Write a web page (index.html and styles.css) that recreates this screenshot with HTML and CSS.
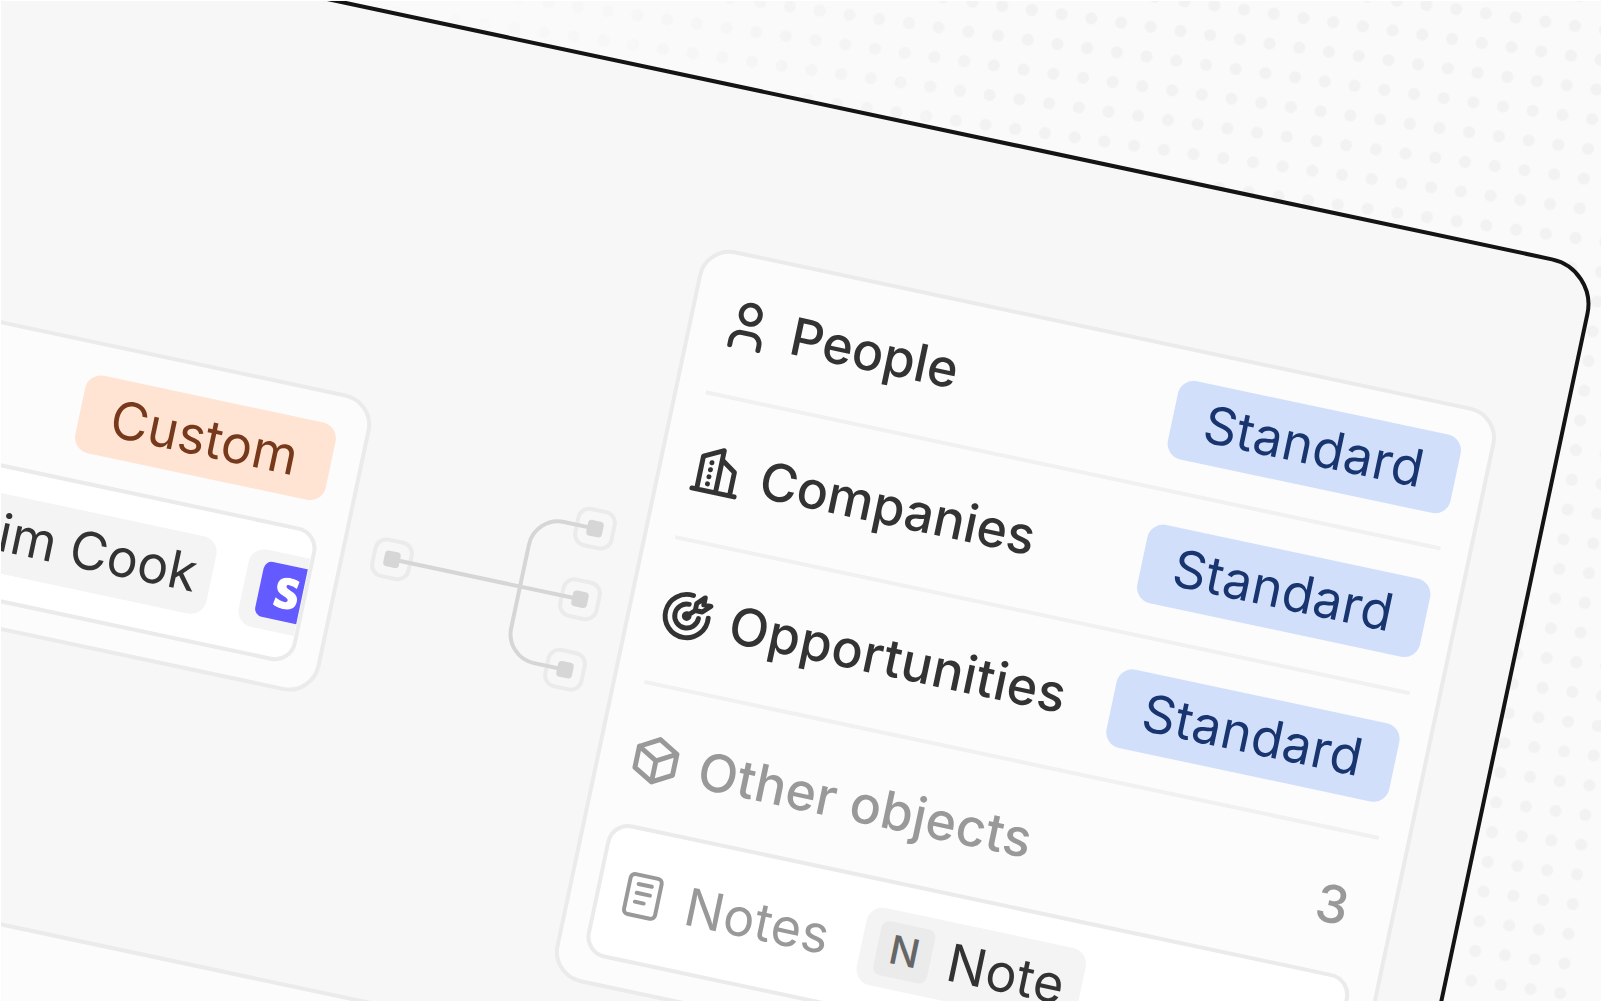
FILE: index.html
```html
<!DOCTYPE html>
<html lang="en">
<head>
<meta charset="utf-8">
<title>Data model</title>
<link rel="stylesheet" href="styles.css">
</head>
<body>
<main class="scene">
  <svg class="dots" viewBox="0 0 1600 1000" aria-hidden="true">
    <defs>
      <pattern id="dot" x="-15" y="-15" width="30" height="30" patternUnits="userSpaceOnUse"><circle cx="15" cy="15" r="6" fill="#f2f2f2"/></pattern>
      <linearGradient id="fade" gradientUnits="userSpaceOnUse" x1="370" y1="0" x2="1000" y2="0"><stop offset="0" stop-color="#fff" stop-opacity="0"/><stop offset="1" stop-color="#fff"/></linearGradient>
      <mask id="fadeMask" maskUnits="userSpaceOnUse" x="0" y="0" width="1600" height="1000"><rect width="1600" height="1000" fill="url(#fade)"/></mask>
    </defs>
    <g mask="url(#fadeMask)"><rect transform="translate(1480.7 42) rotate(8)" x="-1515" y="-315" width="1740" height="1500" fill="url(#dot)"/></g>
  </svg>

  <div class="canvas">
    <div class="frame"></div>

    <section class="card card-source">
      <div class="card-head"><span class="tag tag-custom">Custom</span></div>
      <div class="field field-end">
        <span class="chip chip-person">Tim Cook</span>
        <span class="chip chip-logo">
          <span class="logo"><svg viewBox="0 0 24 24" aria-hidden="true"><path d="M13.976 9.15c-2.172-.806-3.356-1.426-3.356-2.409 0-.831.683-1.305 1.901-1.305 2.227 0 4.515.858 6.09 1.631l.89-5.494C18.252.975 15.697 0 12.165 0 9.667 0 7.589.654 6.104 1.872 4.56 3.147 3.757 4.992 3.757 7.218c0 4.039 2.467 5.76 6.476 7.219 2.585.92 3.445 1.574 3.445 2.583 0 .98-.84 1.545-2.354 1.545-1.875 0-4.965-.921-6.99-2.109l-.9 5.555C5.175 22.99 8.385 24 11.714 24c2.641 0 4.843-.624 6.328-1.813 1.664-1.305 2.525-3.236 2.525-5.732 0-4.128-2.524-5.851-6.594-7.305h.003z"/></svg></span>
        </span>
      </div>
    </section>

    <section class="card card-lower"></section>

    <svg class="links" viewBox="470 365 250 200" aria-hidden="true">
      <g class="ports">
        <rect x="481.2" y="447.1" width="37" height="37" rx="11"/>
        <rect x="673.4" y="374.9" width="37" height="37" rx="11"/>
        <rect x="673.4" y="447.1" width="37" height="37" rx="11"/>
        <rect x="673.4" y="519.1" width="37" height="37" rx="11"/>
      </g>
      <path class="wire" d="M499.7 465.6H691.9M691.9 393.4H660.2A29.6 29.6 0 0 0 630.6 423V508A29.6 29.6 0 0 0 660.2 537.6H691.9"/>
      <g class="pins">
        <rect x="491.7" y="457.6" width="16" height="16" rx="4"/>
        <rect x="683.9" y="385.4" width="16" height="16" rx="4"/>
        <rect x="683.9" y="457.6" width="16" height="16" rx="4"/>
        <rect x="683.9" y="529.6" width="16" height="16" rx="4"/>
      </g>
    </svg>

    <section class="card card-objects">
      <div class="rows">
        <div class="row">
          <svg class="icon" viewBox="0 0 24 24"><path d="M8 7a4 4 0 1 0 8 0a4 4 0 0 0 -8 0M6 21v-2a4 4 0 0 1 4 -4h4a4 4 0 0 1 4 4v2"/></svg>
          <span class="name">People</span><span class="tag tag-standard">Standard</span>
        </div>
        <div class="row">
          <svg class="icon" viewBox="0 0 24 24"><path d="M3 21h18M5 21v-14l8 -4v18M19 21v-10l-6 -4M9 9v.01M9 12v.01M9 15v.01M9 18v.01"/></svg>
          <span class="name">Companies</span><span class="tag tag-standard">Standard</span>
        </div>
        <div class="row">
          <svg class="icon" viewBox="0 0 24 24"><path d="M11 12a1 1 0 1 0 2 0a1 1 0 1 0 -2 0M12 7a5 5 0 1 0 5 5M13 3.055a9 9 0 1 0 7.941 7.945M15 6v3h3l3 -3h-3v-3zM15 9l-3 3"/></svg>
          <span class="name name-wide">Opportunities</span><span class="tag tag-standard">Standard</span>
        </div>
        <div class="row row-muted">
          <svg class="icon" viewBox="0 0 24 24"><path d="M12 3l8 4.5v9l-8 4.5l-8 -4.5v-9l8 -4.5M12 12l8 -4.5M12 12v9M12 12l-8 -4.5"/></svg>
          <span class="name name-wide">Other objects</span><span class="count">3</span>
        </div>
      </div>
      <div class="field">
        <svg class="icon icon-field" viewBox="0 0 24 24"><path d="M5 5a2 2 0 0 1 2 -2h10a2 2 0 0 1 2 2v14a2 2 0 0 1 -2 2h-10a2 2 0 0 1 -2 -2zM9 7h6M9 11h6M9 15h4"/></svg>
        <span class="field-name">Notes</span>
        <span class="chip chip-note"><span class="initial">N</span>Note</span>
      </div>
    </section>
  </div>
</main>
</body>
</html>
```
FILE: styles.css
```css
* { box-sizing: border-box; }

body {
  margin: 0;
  padding: 1px 0 0 1px;
  width: 1601px;
  height: 1001px;
  overflow: hidden;
  background: #fff;
  font-family: Inter, "Liberation Sans", sans-serif;
  font-size: 52px;
  line-height: 62px;
  color: #333;
}

.scene {
  position: relative;
  width: 1600px;
  height: 1000px;
  overflow: hidden;
  background: #fafafa;
}

.dots { display: block; width: 1600px; height: 1000px; }

/* Tilted board that carries the cards and the links between them */
.canvas {
  position: absolute;
  left: -1px;
  top: -1px;
  width: 1620px;
  height: 1400px;
  transform: rotate(12deg);
  transform-origin: 0 0;
}

.frame {
  position: absolute;
  left: -300px;
  top: -70.7px;
  width: 1920.3px;
  height: 1500px;
  background: #f7f7f7;
  border: 4px solid #141414;
  border-radius: 48px;
}

.card {
  position: absolute;
  background: #fcfcfc;
  border: 4px solid #ebebeb;
  border-radius: 32px;
}

.card-source { left: -150px; top: 313.2px; width: 601.8px; height: 304.3px; padding: 0 23.6px; }
.card-lower { left: -150px; top: 902.2px; width: 900px; height: 300px; }
.card-objects { left: 740.1px; top: 92px; width: 815.4px; height: 748.5px; padding: 0 24px; }

.card-head {
  display: flex;
  justify-content: flex-end;
  height: 135.9px;
  padding: 28.4px 4.7px 0;
}

.tag {
  flex: none;
  height: 79.8px;
  padding-left: 32px;
  border-radius: 16px;
  letter-spacing: .17px;
  line-height: 79.8px;
}
.tag-custom { width: 255.8px; background: #ffe3d3; color: #76391b; }
.tag-standard { width: 289.3px; margin-left: auto; background: #d2dffb; color: #18356f; }

.rows { margin: 0 4px 0 3.6px; }

.row {
  display: flex;
  align-items: center;
  height: 148px;
  border-bottom: 4px solid #f1f1f1;
  font-weight: 500;
}
.row:first-child { height: 143.4px; padding-bottom: 4.2px; }
.row .tag { font-weight: 400; }
.row-muted { height: 139.9px; padding-top: 4.5px; border-bottom: 0; color: #999; }

.name { letter-spacing: -.05px; }
.name-wide { letter-spacing: .33px; }

.icon {
  flex: none;
  width: 57.6px;
  height: 57.6px;
  margin: 1px 14.9px 0 -.7px;
  fill: none;
  stroke: currentColor;
  stroke-width: 2.05;
  stroke-linecap: round;
  stroke-linejoin: round;
}
.icon-field { width: 54.4px; height: 54.4px; margin: 0 16.5px 0 0; stroke-width: 1.75; color: #999; }

.count { margin-left: auto; margin-right: 16px; }

.field {
  display: flex;
  align-items: center;
  height: 136.5px;
  padding: 0 16px;
  overflow: clip;
  background: #fff;
  border: 4px solid #ebebeb;
  border-radius: 22px;
}
.field-end { justify-content: flex-end; padding: 0 .5px 0 0; overflow-clip-margin: content-box; }
.field-name { width: 180.5px; color: #999; letter-spacing: .4px; }

.chip {
  display: flex;
  flex: none;
  align-items: center;
  height: 79.6px;
  padding-left: 16px;
  border-radius: 16px;
  background: #f4f4f4;
  white-space: nowrap;
}
.chip-person { justify-content: flex-end; width: 250px; padding-right: 15px; margin-right: 33.4px; }
.chip-logo { width: 222px; margin-right: -162.4px; }
.chip-note { width: 223.5px; letter-spacing: .4px; }

.logo {
  display: flex;
  align-items: center;
  justify-content: center;
  width: 56px;
  height: 56px;
  border-radius: 8px;
  background: #635bff;
}
.logo svg { width: 32px; height: 32px; fill: #fff; }

.initial {
  width: 55px;
  height: 55px;
  margin-right: 16.6px;
  border-radius: 8px;
  background: #ebebeb;
  color: #666;
  font-size: 39.5px;
  font-weight: 500;
  line-height: 55px;
  text-align: center;
}

.links { position: absolute; left: 470px; top: 365px; width: 250px; height: 200px; }
.ports { fill: none; stroke: #ebebeb; stroke-width: 4; }
.wire { fill: none; stroke: #d6d6d6; stroke-width: 4; }
.pins { fill: #d6d6d6; }
```
